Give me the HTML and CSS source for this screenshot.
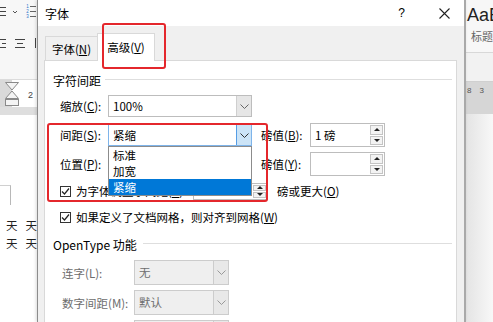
FILE: index.html
```html
<!DOCTYPE html>
<html lang="zh-CN">
<head>
    <meta charset="UTF-8">
    <meta name="viewport" content="width=device-width, initial-scale=1.0">
    <link rel="stylesheet" href="styles.css">
    <title>字体</title>
</head>
<body>
<div class="screen">

    <aside class="word-left">
        <div class="ribbon">
            <svg width="37" height="80" viewBox="0 0 37 80">
                <g stroke="#444" stroke-width="1" fill="none">
                    <path d="M0 7.5h6M0 11.5h6M0 15.5h6"/>
                    <path d="M30 6.5h6M30 11.5h6M30 16.5h6" stroke="#666"/>
                    <path d="M0 39.5h6M2 43.5h4M0 47.5h6"/>
                    <path d="M15 39.5h10M17 43.5h6M15 47.5h10"/>
                    <path d="M35.5 38v10"/>
                    <polyline points="13,11 15,13 17,11" stroke="#555"/>
                </g>
                <g fill="#2e75c8" font-size="4.5" font-family="Liberation Sans, sans-serif">
                    <text x="26.3" y="8">1</text>
                    <text x="26.3" y="13">2</text>
                    <text x="26.3" y="18">3</text>
                </g>
            </svg>
        </div>
        <div class="ruler">
            <svg class="indent" width="16" height="27" viewBox="0 0 16 27">
                <g fill="#f4f4f4" stroke="#8a8a8a">
                    <polygon points="1.5,2.5 14.5,2.5 8,10"/>
                    <polygon points="8,11 1.5,18.5 14.5,18.5"/>
                    <rect x="1.5" y="19.5" width="13" height="6"/>
                </g>
            </svg>
            <span class="num">2</span>
        </div>
        <div class="gap"></div>
        <div class="page">
            <div class="corner"></div>
            <p class="txt"><span>天</span><span>天</span></p>
            <p class="txt"><span>天</span><span>天</span></p>
        </div>
    </aside>

    <section class="dlg">
        <header class="titlebar">
            <span class="title">字体</span>
            <span class="help">?</span>
            <svg class="close" width="11" height="11" viewBox="0 0 11 11">
                <path d="M0.5 0.5l10 10M10.5 0.5l-10 10" stroke="#222" stroke-width="1.1"/>
            </svg>
        </header>

        <nav class="tabs">
            <div class="tab">字体(<u>N</u>)</div>
            <div class="tab on">高级(<u>V</u>)</div>
        </nav>

        <div class="panel">
            <div class="group-title"><span>字符间距</span></div>

            <div class="row">
                <label class="lbl">缩放(<u>C</u>):</label>
                <div class="combo">
                    <span class="val">100%</span>
                    <i class="drop"><svg width="9" height="5" viewBox="0 0 9 5"><polyline points="0.5,0.5 4.5,4.5 8.5,0.5" fill="none" stroke="#666"/></svg></i>
                </div>
            </div>

            <div class="row">
                <label class="lbl">间距(<u>S</u>):</label>
                <div class="combo open">
                    <span class="val">紧缩</span>
                    <i class="drop"><svg width="9" height="5" viewBox="0 0 9 5"><polyline points="0.5,0.5 4.5,4.5 8.5,0.5" fill="none" stroke="#333"/></svg></i>
                    <ul class="list">
                        <li>标准</li>
                        <li>加宽</li>
                        <li class="sel">紧缩</li>
                    </ul>
                </div>
                <label class="lbl2">磅值(<u>B</u>):</label>
                <div class="spin">
                    <span class="val">1 磅</span>
                    <div class="arrows"><b class="up"></b><b class="down"></b></div>
                </div>
            </div>

            <div class="row">
                <label class="lbl">位置(<u>P</u>):</label>
                <div class="combo">
                    <span class="val"></span>
                    <i class="drop"></i>
                </div>
                <label class="lbl2">磅值(<u>Y</u>):</label>
                <div class="spin">
                    <span class="val"></span>
                    <div class="arrows"><b class="up"></b><b class="down"></b></div>
                </div>
            </div>

            <div class="check-row">
                <svg class="box" width="11" height="11" viewBox="0 0 11 11">
                    <rect x="0.5" y="0.5" width="10" height="10" fill="#fff" stroke="#333"/>
                    <polyline points="2,5.5 4.5,8 9,2.5" fill="none" stroke="#222" stroke-width="1.2"/>
                </svg>
                <span class="kern">为字体调整字间距(<u>K</u>):</span>
                <div class="spin small">
                    <span class="val"></span>
                    <div class="arrows"><b class="up"></b><b class="down"></b></div>
                </div>
                <span class="after">磅或更大(<u>O</u>)</span>
            </div>

            <div class="check-row">
                <svg class="box" width="11" height="11" viewBox="0 0 11 11">
                    <rect x="0.5" y="0.5" width="10" height="10" fill="#fff" stroke="#333"/>
                    <polyline points="2,5.5 4.5,8 9,2.5" fill="none" stroke="#222" stroke-width="1.2"/>
                </svg>
                <span>如果定义了文档网格，则对齐到网格(<u>W</u>)</span>
            </div>

            <div class="group-title ot"><span>OpenType 功能</span></div>

            <div class="row ot-row">
                <label class="lbl-ot">连字(L):</label>
                <div class="combo off">
                    <span class="val">无</span>
                    <i class="drop"><svg width="9" height="5" viewBox="0 0 9 5"><polyline points="0.5,0.5 4.5,4.5 8.5,0.5" fill="none" stroke="#999"/></svg></i>
                </div>
            </div>
            <div class="row ot-row">
                <label class="lbl-ot">数字间距(M):</label>
                <div class="combo off">
                    <span class="val">默认</span>
                    <i class="drop"><svg width="9" height="5" viewBox="0 0 9 5"><polyline points="0.5,0.5 4.5,4.5 8.5,0.5" fill="none" stroke="#999"/></svg></i>
                </div>
            </div>
            <div class="row ot-row">
                <span class="lbl-ot"></span>
                <div class="combo off">
                    <span class="val"></span>
                    <i class="drop"></i>
                </div>
            </div>
        </div>
    </section>

    <aside class="word-right">
        <div class="ribbon">
            <div class="sample">AaB</div>
            <div class="name">标题</div>
        </div>
        <div class="band"></div>
        <div class="ruler"><span>8</span><span>3</span></div>
        <div class="doc"></div>
    </aside>

    <div class="mark mark-tab"></div>
    <div class="mark mark-spacing"></div>
</div>
</body>
</html>
```

FILE: styles.css
```css
*{
    margin: 0;
    padding: 0;
    box-sizing: border-box;
}
body{
    font-family: "Noto Sans CJK SC", "Noto Sans", sans-serif;
    font-size: 11.5px;
    color: #000;
    background-color: #fff;
    overflow: hidden;
}
u{
    text-decoration: underline;
    text-underline-offset: 1px;
}
.screen{
    position: relative;
    display: flex;
    width: 493px;
    height: 322px;
    overflow: hidden;
}

/* word window, left part */
.word-left{
    width: 37px;
    flex: none;
    display: flex;
    flex-direction: column;
}
.word-left .ribbon{
    height: 80px;
    background-color: #f7f7f7;
    border-bottom: 1px solid #dcdcdc;
}
.word-left .ribbon svg{
    display: block;
}
.word-left .ruler{
    height: 27px;
    display: flex;
    align-items: center;
    padding-left: 4px;
    background: linear-gradient(to right, #d9d9d9 0, #d9d9d9 12px, #fff 12px);
}
.word-left .indent{
    display: block;
}
.word-left .num{
    margin: 3px 0 0 8px;
    font-family: "Liberation Sans", sans-serif;
    font-size: 9px;
    color: #444;
}
.word-left .gap{
    height: 8px;
    background-color: #dedede;
}
.word-left .page{
    flex: 1;
    background-color: #fff;
}
.corner{
    width: 11px;
    height: 20px;
    margin-top: 70px;
    border-right: 1px solid #b8b8b8;
    border-top: 1px solid #d0d0d0;
}
.txt{
    display: flex;
    gap: 8px;
    padding-left: 6px;
    font-size: 11.5px;
    line-height: 18px;
    color: #222;
}
.txt:first-of-type{
    margin-top: 11px;
}

/* dialog */
.dlg{
    width: 429px;
    flex: none;
    display: flex;
    flex-direction: column;
    background-color: #f0f0f0;
    border-left: 1px solid #8c8c8c;
    border-right: 2px solid #a9a9a9;
    box-shadow: -1px 0 3px rgba(0, 0, 0, 0.15);
    position: relative;
}
.titlebar{
    height: 26px;
    flex: none;
    display: flex;
    align-items: center;
    padding: 0 14px 0 7px;
    background-color: #fff;
}
.title{
    font-size: 12px;
}
.help{
    margin-left: auto;
    margin-right: 34px;
    font-size: 12px;
    font-family: "Liberation Sans", sans-serif;
}
.tabs{
    height: 34px;
    flex: none;
    display: flex;
    align-items: flex-end;
    padding-left: 7px;
}
.tab{
    width: 52px;
    height: 24px;
    display: flex;
    align-items: center;
    justify-content: center;
    border: 1px solid #d9d9d9;
    border-right: none;
    border-bottom: none;
}
.tab.on{
    width: 58px;
    height: 28px;
    margin-bottom: -1px;
    background-color: #fff;
    border-right: 1px solid #d9d9d9;
    position: relative;
    z-index: 1;
    padding-bottom: 1px;
}
.panel{
    flex: 1;
    margin: 0 7px 0 6px;
    padding: 0 4px 0 8px;
    background-color: #fff;
    border: 1px solid #d9d9d9;
    border-bottom: none;
}
.group-title{
    height: 20px;
    margin-top: 9px;
    display: flex;
    align-items: center;
    font-size: 12px;
}
.group-title::after{
    content: "";
    flex: 1;
    margin: -2px 0 0 4px;
    border-top: 1px solid #dedede;
}
.group-title.ot{
    margin-top: 8px;
}
.group-title.ot::after{
    margin: -1px 0 0 6px;
}
.row{
    height: 24px;
    margin-top: 5px;
    padding-left: 7px;
    display: flex;
    align-items: center;
}
.group-title + .row{
    margin-top: 4px;
}
.lbl{
    width: 48px;
    flex: none;
}
.lbl2{
    width: 49px;
    margin-left: 9px;
    flex: none;
}
.combo{
    position: relative;
    width: 144px;
    height: 22px;
    flex: none;
    display: flex;
    border: 1px solid #bdbdbd;
    background-color: #fff;
}
.combo .val{
    flex: 1;
    padding-left: 4px;
    line-height: 20px;
}
.drop{
    width: 15px;
    display: flex;
    align-items: center;
    justify-content: center;
    background-color: #e6e6e6;
    border-left: 1px solid #cfcfcf;
}
.drop svg{
    display: block;
}
.combo.open{
    border-color: #7eb4ea;
    z-index: 5;
}
.combo.open .drop{
    background-color: #cce4f7;
    border-left-color: #569de5;
}
.list{
    position: absolute;
    top: 21px;
    left: -1px;
    right: -1px;
    list-style: none;
    background-color: #fff;
    border: 1px solid #8c8c8c;
}
.list li{
    height: 16px;
    line-height: 16px;
    padding-left: 4px;
}
.list li.sel{
    background-color: #0078d7;
    color: #fff;
}
.spin{
    width: 75px;
    height: 24px;
    flex: none;
    display: flex;
    border: 1px solid #bdbdbd;
    background-color: #fff;
}
.spin .val{
    flex: 1;
    padding-left: 4px;
    line-height: 22px;
}
.arrows{
    width: 13px;
    margin: 1px 1px 1px 0;
    display: flex;
    flex-direction: column;
    gap: 1px;
}
.arrows b{
    flex: 1;
    display: flex;
    align-items: center;
    justify-content: center;
    border: 1px solid #c4c4c4;
    background-color: #f3f3f3;
}
.arrows b::before{
    content: "";
    border-left: 3px solid transparent;
    border-right: 3px solid transparent;
}
.arrows .up::before{
    border-bottom: 3px solid #222;
}
.arrows .down::before{
    border-top: 3px solid #222;
}
.spin.small{
    height: 17px;
}
.spin.small .val{
    line-height: 15px;
}
.check-row{
    height: 18px;
    margin-top: 6px;
    padding-left: 7px;
    display: flex;
    align-items: center;
}
.check-row + .check-row{
    margin-top: 8px;
}
.check-row .box{
    display: block;
    flex: none;
    margin-right: 5px;
}
.kern{
    width: 117px;
    flex: none;
    white-space: nowrap;
}
.after{
    margin-left: 9px;
}
.ot-row{
    height: 25px;
    padding-left: 9px;
}
.group-title + .ot-row{
    margin-top: 6px;
}
.lbl-ot{
    width: 72px;
    flex: none;
    color: #6d6d6d;
}
.combo.off{
    width: 95px;
    height: 25px;
    background-color: #efefef;
    border-color: #cccccc;
    color: #6d6d6d;
}
.combo.off .val{
    line-height: 23px;
}
.combo.off .drop{
    background-color: #e8e8e8;
    border-left-color: #cccccc;
}

/* word window, right part */
.word-right{
    flex: 1;
    display: flex;
    flex-direction: column;
    overflow: hidden;
    white-space: nowrap;
}
.word-right .ribbon{
    height: 53px;
    background-color: #f7f7f7;
    border-bottom: 1px solid #d8d8d8;
    padding: 3px 0 0 1px;
}
.sample{
    font-family: "Liberation Sans", sans-serif;
    font-size: 18px;
    line-height: 24px;
    color: #222;
}
.name{
    padding-left: 4px;
    font-size: 11px;
    line-height: 18px;
    color: #666;
}
.word-right .band{
    height: 29px;
    background-color: #f2f2f2;
    border-bottom: 1px solid #d0d0d0;
}
.word-right .ruler{
    height: 32px;
    display: flex;
    gap: 8px;
    padding: 4px 0 0 1px;
    background-color: #d6d6d6;
    font-family: "Liberation Sans", sans-serif;
    font-size: 8px;
    color: #555;
}
.word-right .doc{
    flex: 1;
    background: linear-gradient(to right, #e4e4e4, #f8f8f8);
}

/* red annotation boxes */
.mark{
    position: absolute;
    border: 2px solid #e4272c;
    border-radius: 3px;
    z-index: 10;
}
.mark-tab{
    left: 102px;
    top: 23px;
    width: 64px;
    height: 46px;
}
.mark-spacing{
    left: 47px;
    top: 123px;
    width: 221px;
    height: 79px;
}
```
